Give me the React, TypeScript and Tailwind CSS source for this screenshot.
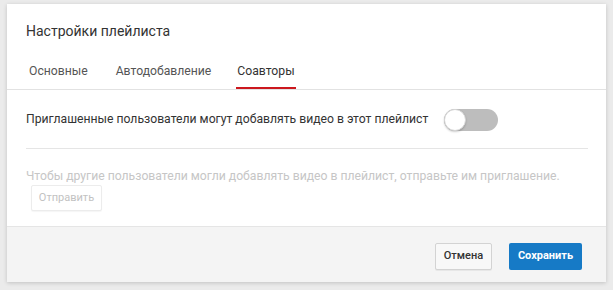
import React from "react";

const font = "font-['Roboto','Noto_Sans',sans-serif]";

export default function App(): JSX.Element {
  return (
    <div className={`w-[613px] h-[290px] bg-[#ebebeb] pl-[7px] pt-[4px] ${font}`}>
      <div className="w-[599px] h-[278px] bg-white flex flex-col shadow-[0_1px_4px_rgba(0,0,0,0.18)]">
        <div className="px-[19px] pt-[17px] h-[48px]">
          <h1 className="text-[14px] leading-[20px] text-[#333333]">Настройки плейлиста</h1>
        </div>

        <div className="flex items-end px-[22px] h-[38px] border-b border-[#e2e2e2]">
          <div className="text-[12.2px] leading-[16px] text-[#555555] pb-[10px]">Основные</div>
          <div className="ml-[28px] text-[12.2px] leading-[16px] text-[#555555] pb-[10px]">Автодобавление</div>
          <div className="ml-[25px] text-[12.2px] leading-[16px] text-[#333333] pb-[8px] border-b-[2px] border-[#cc181e] px-[1px]">
            Соавторы
          </div>
        </div>

        <div className="px-[19px] flex-1">
          <div className="flex items-center gap-[16px] h-[59px] border-b border-[#e5e5e5] w-[562px] pt-[1px]">
            <span className="text-[12.2px] text-[#333333]">
              Приглашенные пользователи могут добавлять видео в этот плейлист
            </span>
            <div className="w-[54px] h-[22px] rounded-full bg-[#bdbdbd] relative">
              <div className="absolute left-0 top-0 w-[22px] h-[22px] rounded-full bg-white border border-[#d6d6d6] shadow-[0_1px_2px_rgba(0,0,0,0.2)]" />
            </div>
          </div>
          <p className="text-[12.2px] leading-[16px] text-[#c6c6c6] mt-[19px] whitespace-nowrap">
            Чтобы другие пользователи могли добавлять видео в плейлист, отправьте им приглашение.
          </p>
          <button className="mt-[1px] ml-[5px] w-[71px] h-[26px] border border-[#ececec] rounded-[2px] text-[11px] text-[#c2c2c2] bg-white shadow-[0_1px_1px_rgba(0,0,0,0.04)]">
            Отправить
          </button>
        </div>

        <div className="h-[56px] bg-[#f4f4f4] border-t border-[#e5e5e5] flex items-center justify-end gap-[17px] pr-[24px] pt-[4px]">
          <button className="w-[57px] h-[27px] border border-[#d3d3d3] rounded-[2px] bg-[#f8f8f8] text-[11px] font-medium text-[#333333] shadow-[0_1px_0_rgba(0,0,0,0.05)]">
            Отмена
          </button>
          <button className="w-[73px] h-[27px] rounded-[2px] bg-[#167ac6] text-[11px] font-bold text-white">
            Сохранить
          </button>
        </div>
      </div>
    </div>
  );
}
